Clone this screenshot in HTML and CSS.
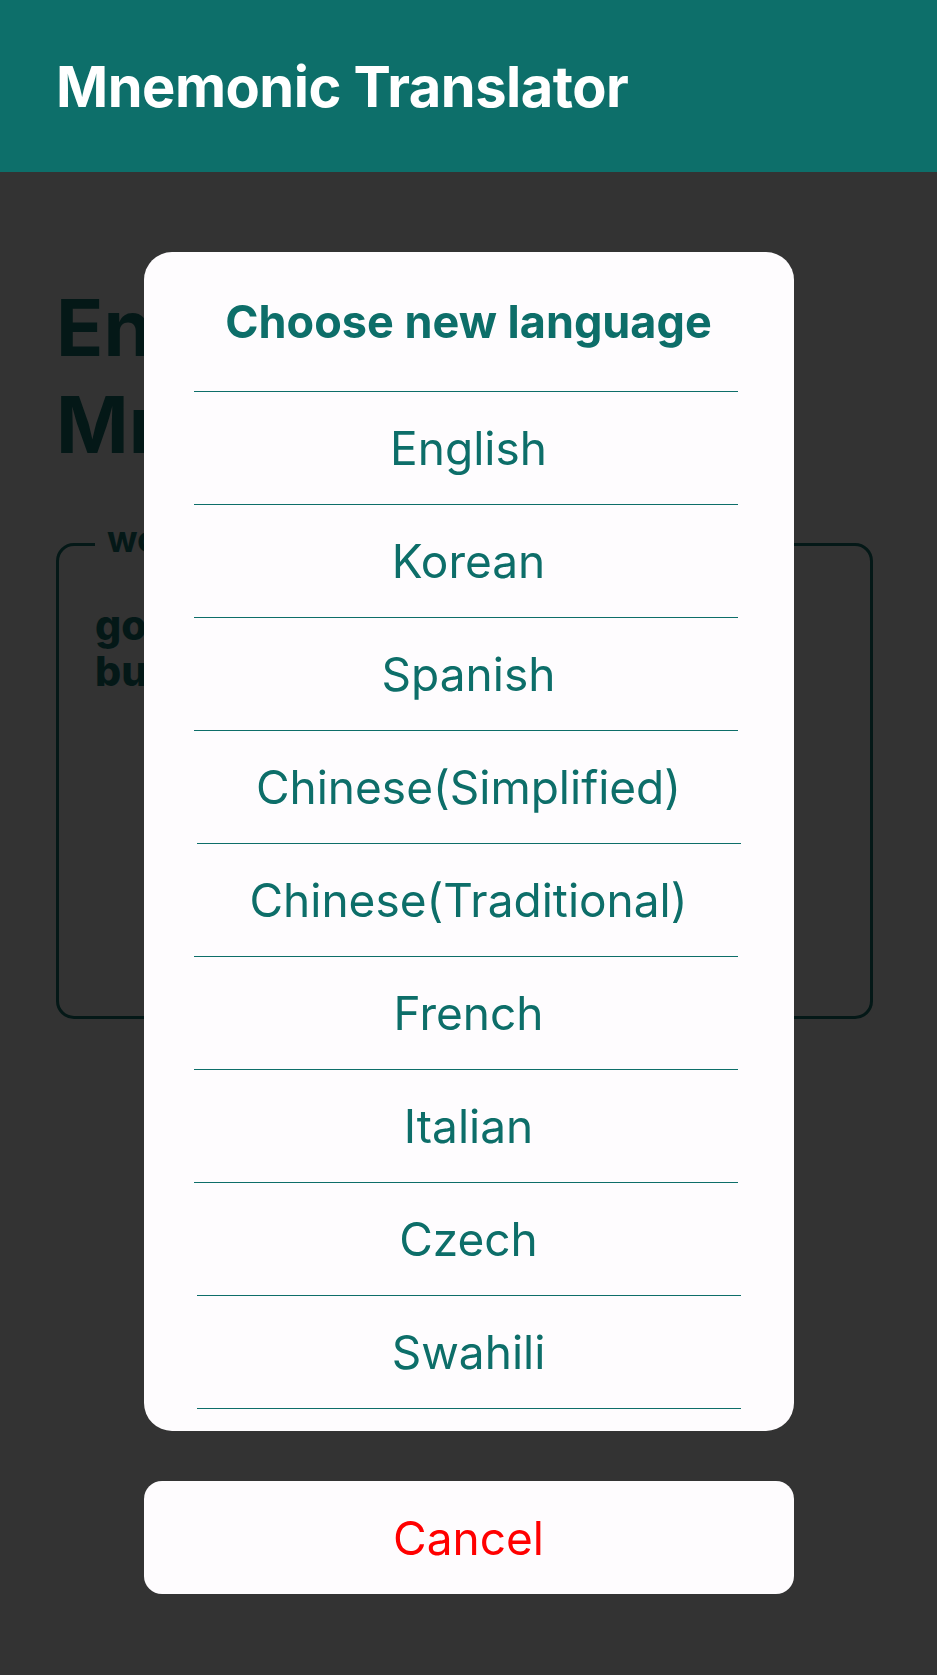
FILE: index.html
```html
<!DOCTYPE html>
<html lang="en">
<head>
<meta charset="utf-8">
<title>Mnemonic Translator</title>
<link rel="stylesheet" href="styles.css">
</head>
<body>
<header class="app-bar">
  <h1 class="app-title">Mnemonic Translator</h1>
</header>
<main class="content">
  <h2 class="page-heading">English<br>Mnemonic</h2>
  <fieldset class="word-box">
    <legend class="word-legend">word</legend>
    <p class="word-text">good<br>butter</p>
  </fieldset>
</main>
<div class="overlay">
  <div class="sheet">
    <h3 class="sheet-title">Choose new language</h3>
    <div class="divider"></div>
    <button class="option">English</button>
    <div class="divider"></div>
    <button class="option">Korean</button>
    <div class="divider"></div>
    <button class="option">Spanish</button>
    <div class="divider"></div>
    <button class="option">Chinese(Simplified)</button>
    <div class="divider divider-shift"></div>
    <button class="option">Chinese(Traditional)</button>
    <div class="divider"></div>
    <button class="option">French</button>
    <div class="divider"></div>
    <button class="option">Italian</button>
    <div class="divider"></div>
    <button class="option">Czech</button>
    <div class="divider divider-shift"></div>
    <button class="option">Swahili</button>
    <div class="divider divider-shift"></div>
  </div>
  <button class="cancel">Cancel</button>
</div>
</body>
</html>
```

FILE: styles.css
```css
* {
  box-sizing: border-box;
}

html, body {
  margin: 0;
  padding: 0;
}

body {
  background: #333333;
  font-family: Inter, "Noto Sans", "Liberation Sans", sans-serif;
  min-height: 1675px;
}

.app-bar {
  background: #0d6f6a;
  height: 172px;
  padding: 53px 0 0 56px;
}

.app-title {
  margin: 0;
  color: #ffffff;
  font-size: 56px;
  font-weight: 700;
  line-height: 68px;
  letter-spacing: -0.5px;
}

.content {
  background: #333333;
  padding: 107px 0 0 0;
}

.page-heading {
  margin: 0;
  padding-left: 56px;
  color: #041817;
  font-size: 78px;
  font-weight: 700;
  line-height: 97px;
}

.word-box {
  margin: 49px 0 0 56px;
  width: 817px;
  min-inline-size: 0;
  padding: 36px 36px 0 36px;
  border: 3px solid #041817;
  border-radius: 18px;
}

.word-legend {
  padding: 0 12px 10px 12px;
  color: #041817;
  font-size: 36px;
  font-weight: 700;
  line-height: 34px;
}

.word-text {
  margin: 0;
  min-height: 414px;
  color: #041817;
  font-size: 41px;
  font-weight: 800;
  line-height: 46px;
}

.overlay {
  position: fixed;
  inset: 0;
  display: flex;
  flex-direction: column;
  align-items: center;
  padding-top: 252px;
}

.sheet {
  width: 650px;
  background: #fefcfe;
  border-radius: 28px;
  padding: 43px 0 22px 0;
  display: flex;
  flex-direction: column;
}

.sheet-title {
  margin: 0 0 42px 0;
  text-align: center;
  color: #0d6e69;
  font-size: 45px;
  font-weight: 700;
  line-height: 54px;
}

.divider {
  height: 1px;
  width: 544px;
  margin-left: 50px;
  background: #0d6e69;
}

.divider-shift {
  margin-left: 53px;
}

.option {
  display: block;
  width: 100%;
  height: 112px;
  margin: 0;
  padding: 0;
  border: none;
  background: transparent;
  font-family: inherit;
  font-size: 46px;
  font-weight: 400;
  line-height: 54px;
  color: #0d6e69;
  text-align: center;
}

.cancel {
  margin-top: 50px;
  width: 650px;
  height: 113px;
  padding: 0;
  border: none;
  border-radius: 18px;
  background: #fefcfe;
  font-family: inherit;
  font-size: 46px;
  font-weight: 400;
  line-height: 54px;
  color: #ff0000;
  text-align: center;
}
```
